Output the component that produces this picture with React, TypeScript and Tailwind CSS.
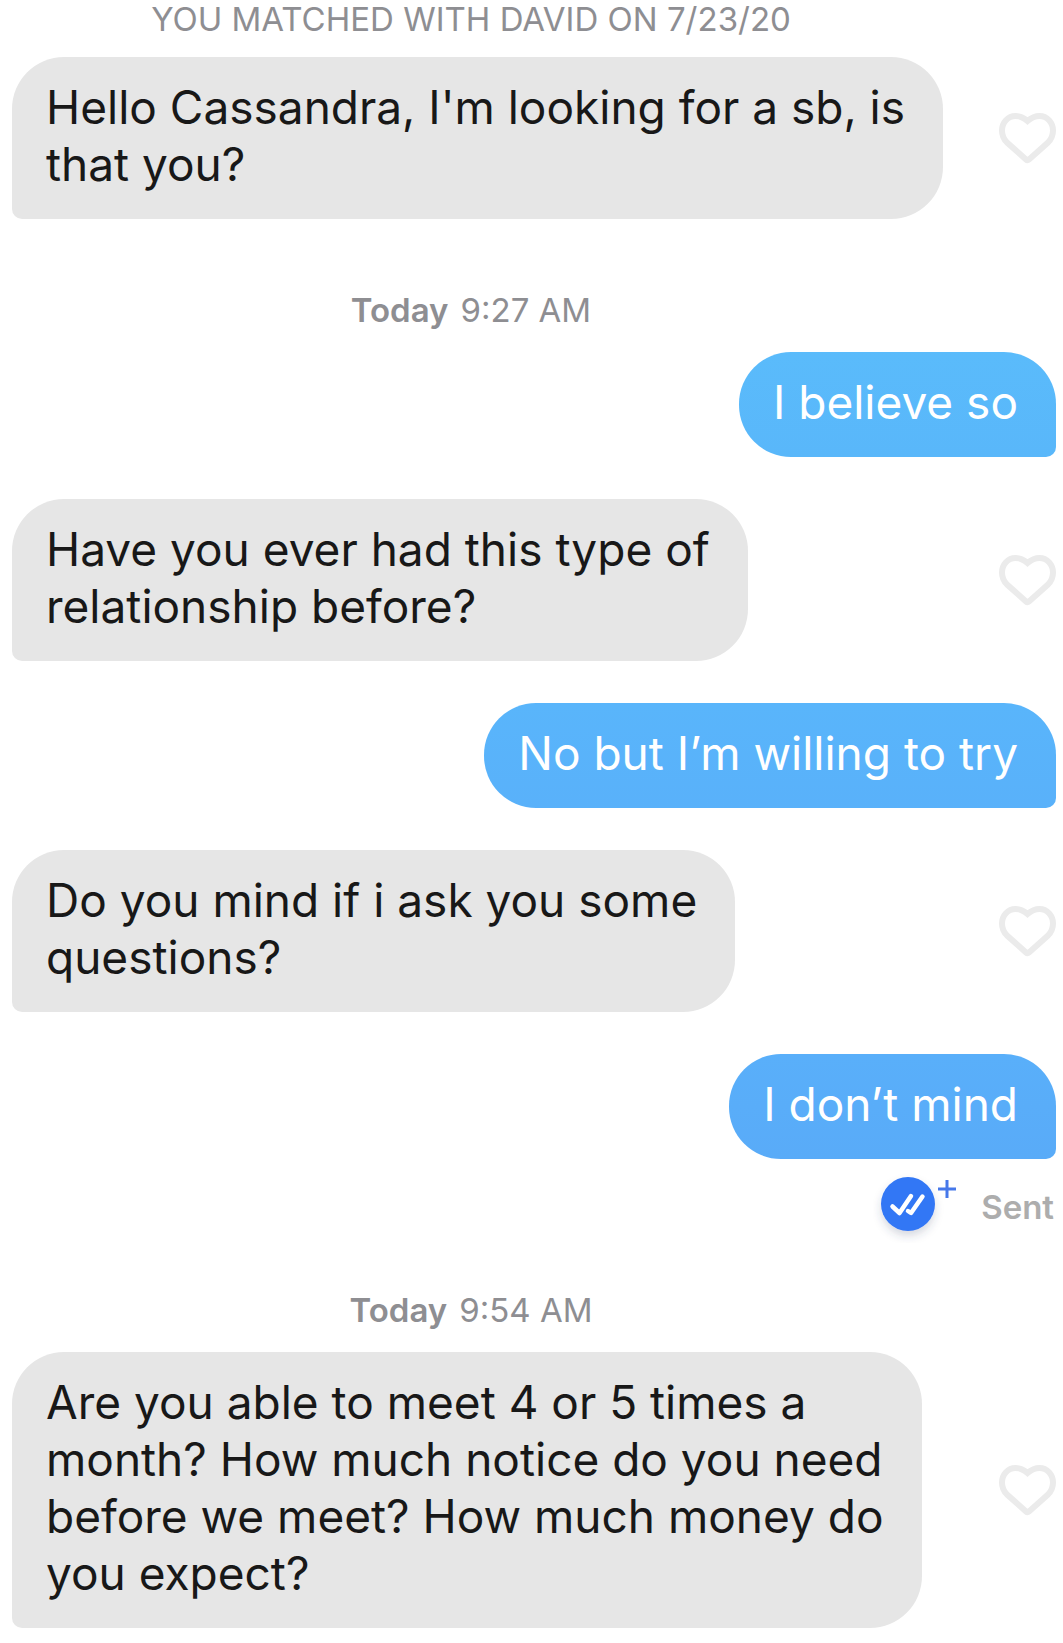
type Message = { lines: string[]; mine?: boolean; tone?: string }

const HeartButton = () => (
  <button type="button" aria-label="Like message" className="shrink-0">
    <svg viewBox="0 0 57 51" className="h-[51px] w-[57px]" fill="none" stroke="#ebebeb" strokeWidth="6" strokeLinejoin="miter">
      <path d="M28.5 8C25 5 21 3 16.500 3C9 3 3 9.500 3 17.500C3 22.500 4.500 26 8 29.500L27 46.500Q28.500 47.800 30 46.500L49 29.500C52.500 26 54 22.500 54 17.500C54 9.500 48 3 40.500 3C36 3 32 5 28.500 8Z" />
    </svg>
  </button>
)

const Bubble = ({ lines, mine, tone }: Message) => {
  const text = lines.map(line => (
    <span key={line} className="block whitespace-nowrap">{line}</span>
  ))

  if (mine) {
    return (
      <div className="flex justify-end">
        <p className={`rounded-[52px] rounded-br-[10px] pt-[22px] pr-[38px] pb-[26px] pl-[34px] text-white ${tone}`}>{text}</p>
      </div>
    )
  }
  return (
    <div className="flex items-center justify-between">
      <p className="rounded-[52px] rounded-bl-[10px] bg-[#e6e6e6] pt-[22px] pr-[38px] pb-[26px] pl-[34px] text-[#181818]">{text}</p>
      <HeartButton />
    </div>
  )
}

const TimeLabel = ({ time }: { time: string }) => (
  <p className="w-[918px] max-w-full text-center text-[33px] leading-[38px] text-[#8e8e92]">
    <span className="mr-3 font-semibold">Today</span>
    {time}
  </p>
)

const Receipt = () => (
  <div className="flex items-center justify-end gap-6 pr-0.5 text-[33px] leading-10 font-semibold text-[#adadad]">
    <svg viewBox="0 0 84 72" className="h-[72px] w-[84px]" fill="none" aria-hidden="true">
      <defs>
        <filter id="drop" x="-30%" y="-30%" width="160%" height="170%">
          <feDropShadow dx="0" dy="5" stdDeviation="4" floodColor="#3b4a6b" floodOpacity="0.2" />
        </filter>
      </defs>
      <circle cx="35" cy="33" r="27" fill="#3277f5" filter="url(#drop)" />
      <g stroke="#fff" strokeWidth="4.5" strokeLinecap="round" strokeLinejoin="round">
        <path d="M19.500 35.500L26.500 42L38 25" />
        <path d="M35 40L38 42L49.500 25.500" />
      </g>
      <path d="M65 18H83M74 9V27" stroke="#4678ea" strokeWidth="3" />
    </svg>
    Sent
  </div>
)

export default function App() {
  return (
    <main className="bg-white pr-[7px] pb-3 pl-3 font-['Inter',sans-serif] text-[46px] leading-[57px]">
      <p className="w-[918px] max-w-full text-center text-[33px] leading-[38px] text-[#8e8e92]">YOU MATCHED WITH DAVID ON 7/23/20</p>

      <section className="mt-[19px]">
        <Bubble lines={["Hello Cassandra, I'm looking for a sb, is", 'that you?']} />
      </section>

      <section className="mt-[72px]">
        <TimeLabel time="9:27 AM" />
        <div className="mt-[23px] flex flex-col gap-[42px]">
          <Bubble mine tone="bg-linear-to-b from-[#5abbfb] to-[#59b7fa]" lines={['I believe so']} />
          <Bubble lines={['Have you ever had this type of', 'relationship before?']} />
          <Bubble mine tone="bg-linear-to-b from-[#59b5fb] to-[#59b1fa]" lines={['No but I’m willing to try']} />
          <Bubble lines={['Do you mind if i ask you some', 'questions?']} />
          <Bubble mine tone="bg-linear-to-b from-[#59affa] to-[#59abf8]" lines={['I don’t mind']} />
        </div>
        <div className="mt-3">
          <Receipt />
        </div>
      </section>

      <section className="mt-12">
        <TimeLabel time="9:54 AM" />
        <div className="mt-[23px]">
          <Bubble lines={['Are you able to meet 4 or 5 times a', 'month? How much notice do you need', 'before we meet? How much money do', 'you expect?']} />
        </div>
      </section>
    </main>
  )
}
